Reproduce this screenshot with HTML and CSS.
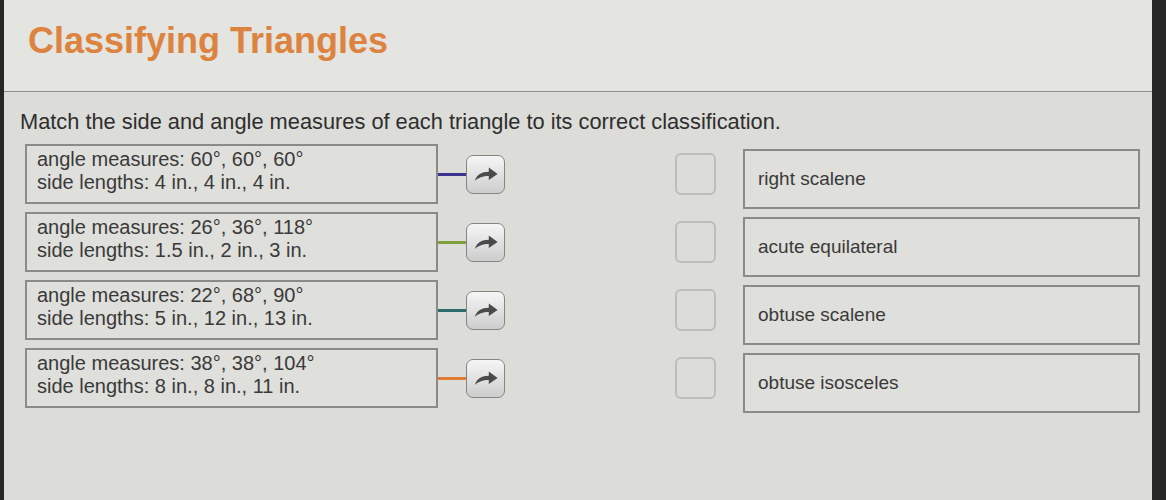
FILE: index.html
```html
<!DOCTYPE html>
<html>
<head>
<meta charset="utf-8">
<link rel="stylesheet" href="styles.css">
</head>
<body>
<div class="panel">
  <header class="header">
    <h1 class="title">Classifying Triangles</h1>
  </header>
  <main class="content">
    <p class="prompt">Match the side and angle measures of each triangle to its correct classification.</p>
    <div class="rows">
      <div class="row">
        <div class="item">angle measures: 60°, 60°, 60°<br>side lengths: 4 in., 4 in., 4 in.</div>
        <span class="wire wire-purple"></span>
        <button class="btn"><svg class="icon" viewBox="0 0 28 20"><path d="M2 17C4 10 9.5 7 17 7V2.5L26.5 9.5L17 16V11.6C10.5 11.6 6 13.2 2 17Z" fill="#4a4a4a"/></svg></button>
        <span class="target"></span>
        <div class="choice">right scalene</div>
      </div>
      <div class="row">
        <div class="item">angle measures: 26°, 36°, 118°<br>side lengths: 1.5 in., 2 in., 3 in.</div>
        <span class="wire wire-green"></span>
        <button class="btn"><svg class="icon" viewBox="0 0 28 20"><path d="M2 17C4 10 9.5 7 17 7V2.5L26.5 9.5L17 16V11.6C10.5 11.6 6 13.2 2 17Z" fill="#4a4a4a"/></svg></button>
        <span class="target"></span>
        <div class="choice">acute equilateral</div>
      </div>
      <div class="row">
        <div class="item">angle measures: 22°, 68°, 90°<br>side lengths: 5 in., 12 in., 13 in.</div>
        <span class="wire wire-teal"></span>
        <button class="btn"><svg class="icon" viewBox="0 0 28 20"><path d="M2 17C4 10 9.5 7 17 7V2.5L26.5 9.5L17 16V11.6C10.5 11.6 6 13.2 2 17Z" fill="#4a4a4a"/></svg></button>
        <span class="target"></span>
        <div class="choice">obtuse scalene</div>
      </div>
      <div class="row">
        <div class="item">angle measures: 38°, 38°, 104°<br>side lengths: 8 in., 8 in., 11 in.</div>
        <span class="wire wire-orange"></span>
        <button class="btn"><svg class="icon" viewBox="0 0 28 20"><path d="M2 17C4 10 9.5 7 17 7V2.5L26.5 9.5L17 16V11.6C10.5 11.6 6 13.2 2 17Z" fill="#4a4a4a"/></svg></button>
        <span class="target"></span>
        <div class="choice">obtuse isosceles</div>
      </div>
    </div>
  </main>
</div>
</body>
</html>
```

FILE: styles.css
```css
html, body {
  margin: 0;
  padding: 0;
  background: #262626;
  height: 100%;
  overflow: hidden;
}
body {
  font-family: "Liberation Sans", Arial, sans-serif;
  color: #3a3a3a;
}
.panel {
  margin: 0 14px 0 4px;
  height: 500px;
  background: #dcdcd8;
}
.header {
  height: 92px;
  box-sizing: border-box;
  padding: 21px 0 0 24px;
  background: #e4e4e0;
  border-bottom: 1px solid #8f8f8c;
}
.title {
  margin: 0;
  font-size: 36px;
  line-height: 40px;
  font-weight: bold;
  color: #dc8340;
}
.content {
  padding: 17px 0 0 16px;
}
.prompt {
  margin: 0;
  font-size: 21.8px;
  line-height: 25px;
  color: #2e2e2e;
}
.rows {
  margin-top: 10px;
  padding-left: 5px;
  display: flex;
  flex-direction: column;
  gap: 8px;
}
.row {
  display: flex;
  align-items: center;
  height: 60px;
}
.item {
  width: 413px;
  height: 60px;
  box-sizing: border-box;
  padding: 2px 10px 0;
  border: 2px solid #8a8a87;
  background: #dfdfdb;
  font-size: 20px;
  line-height: 23px;
  color: #3a3a3a;
}
.wire {
  width: 28px;
  height: 3px;
}
.wire-purple { background: #3c3390; }
.wire-green { background: #7fa03c; }
.wire-teal { background: #2e6a6c; }
.wire-orange { background: #e07c34; }
.btn {
  width: 39px;
  height: 39px;
  padding: 0;
  box-sizing: border-box;
  border: 1px solid #858585;
  border-radius: 7px;
  background: linear-gradient(#f6f6f6, #cdcdcd);
  display: flex;
  align-items: center;
  justify-content: center;
}
.icon {
  width: 26px;
  height: 19px;
  display: block;
}
.target {
  width: 41px;
  height: 42px;
  box-sizing: border-box;
  margin-left: 170px;
  border: 2px solid #bdbdba;
  border-radius: 6px;
}
.choice {
  width: 397px;
  height: 60px;
  box-sizing: border-box;
  margin-left: 27px;
  margin-top: 10px;
  padding-left: 13px;
  display: flex;
  align-items: center;
  border: 2px solid #8a8a87;
  background: #dfdfdb;
  font-size: 19px;
  color: #3a3a3a;
}
```
